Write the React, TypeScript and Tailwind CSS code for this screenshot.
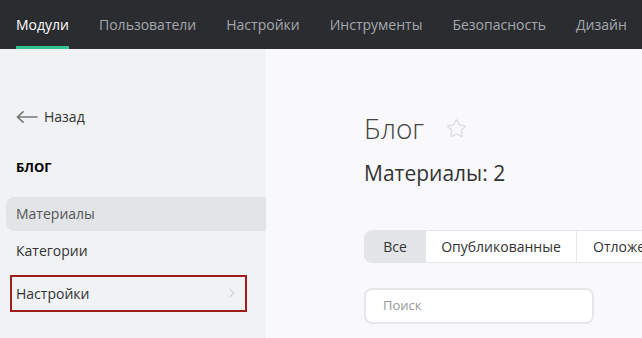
import { ChevronRight, Star } from "lucide-react";

const navItems = ["Модули", "Пользователи", "Настройки", "Инструменты", "Безопасность", "Дизайн"];

export default function App() {
  return (
    <div className="h-[338px] w-[642px] overflow-hidden bg-[#f9f9fb] font-['Open_Sans',sans-serif] text-[#333]">
      {/* top navigation */}
      <div className="flex h-[49px] gap-[30px] whitespace-nowrap bg-[#2b2c2f] pl-4">
        {navItems.map((item, i) => (
          <div
            key={item}
            className={`flex items-center border-b-[3px] pt-[2px] text-[14px] ${
              i === 0 ? "border-[#34c38f] text-white" : "border-transparent text-[#a4a8ae]"
            }`}
          >
            {item}
          </div>
        ))}
      </div>

      <div className="flex h-[289px]">
        {/* sidebar */}
        <div className="w-[266px] shrink-0 bg-[#f0f2f3] pt-[57px] pl-[6px]">
          <div className="flex items-center gap-[6px] pl-[10px] text-[14px] text-[#333]">
            <svg width="22" height="12" viewBox="0 0 22 12" fill="none" stroke="#777" strokeWidth="1.6" strokeLinecap="round">
              <path d="M21 6H1.5M7 0.8L1.5 6L7 11.2" />
            </svg>
            Назад
          </div>
          <div className="mt-[31px] pl-[10px] text-[13px] font-bold text-black">БЛОГ</div>
          <div className="mt-[19px] flex h-[34px] items-center rounded-l-[8px] bg-[#e2e4e7] pl-[10px] text-[14px] text-[#555]">
            Материалы
          </div>
          <div className="flex h-[40px] items-center pl-[10px] text-[14px] text-[#333]">Категории</div>
          <div className="mt-[4px] ml-[4px] flex h-[37px] w-[237px] items-center justify-between border-2 border-[#a11d1d] pl-[4px] pr-[6px] text-[14px] text-[#333]">
            Настройки
            <ChevronRight size={14} strokeWidth={1.3} className="text-[#aaa]" />
          </div>
        </div>

        {/* main */}
        <div className="flex-1 pl-[98px] pt-[62px]">
          <div className="flex items-center gap-[22px]">
            <span className="text-[28px] font-light leading-[34px] text-[#444]">Блог</span>
            <Star size={21} strokeWidth={1.4} className="text-[#d9dbde]" />
          </div>
          <div className="mt-[13px] text-[21px] leading-[30px] text-[#333]">Материалы: 2</div>

          <div className="mt-[42px] flex h-[33px] w-[320px] whitespace-nowrap text-[14px] text-[#333]">
            <div className="flex w-[62px] items-center justify-center rounded-l-[8px] bg-[#e3e5e8]">Все</div>
            <div className="flex w-[151px] items-center justify-center border-y border-r border-[#e5e7ea] bg-white">
              Опубликованные
            </div>
            <div className="flex items-center border-y border-[#e5e7ea] bg-white pl-[16px]">Отложенные</div>
          </div>

          <div className="mt-[25px] flex h-[36px] w-[230px] items-center rounded-[8px] border-2 border-[#e6e7e9] bg-white pl-[17px] text-[13px] text-[#999]">
            Поиск
          </div>
        </div>
      </div>
    </div>
  );
}
